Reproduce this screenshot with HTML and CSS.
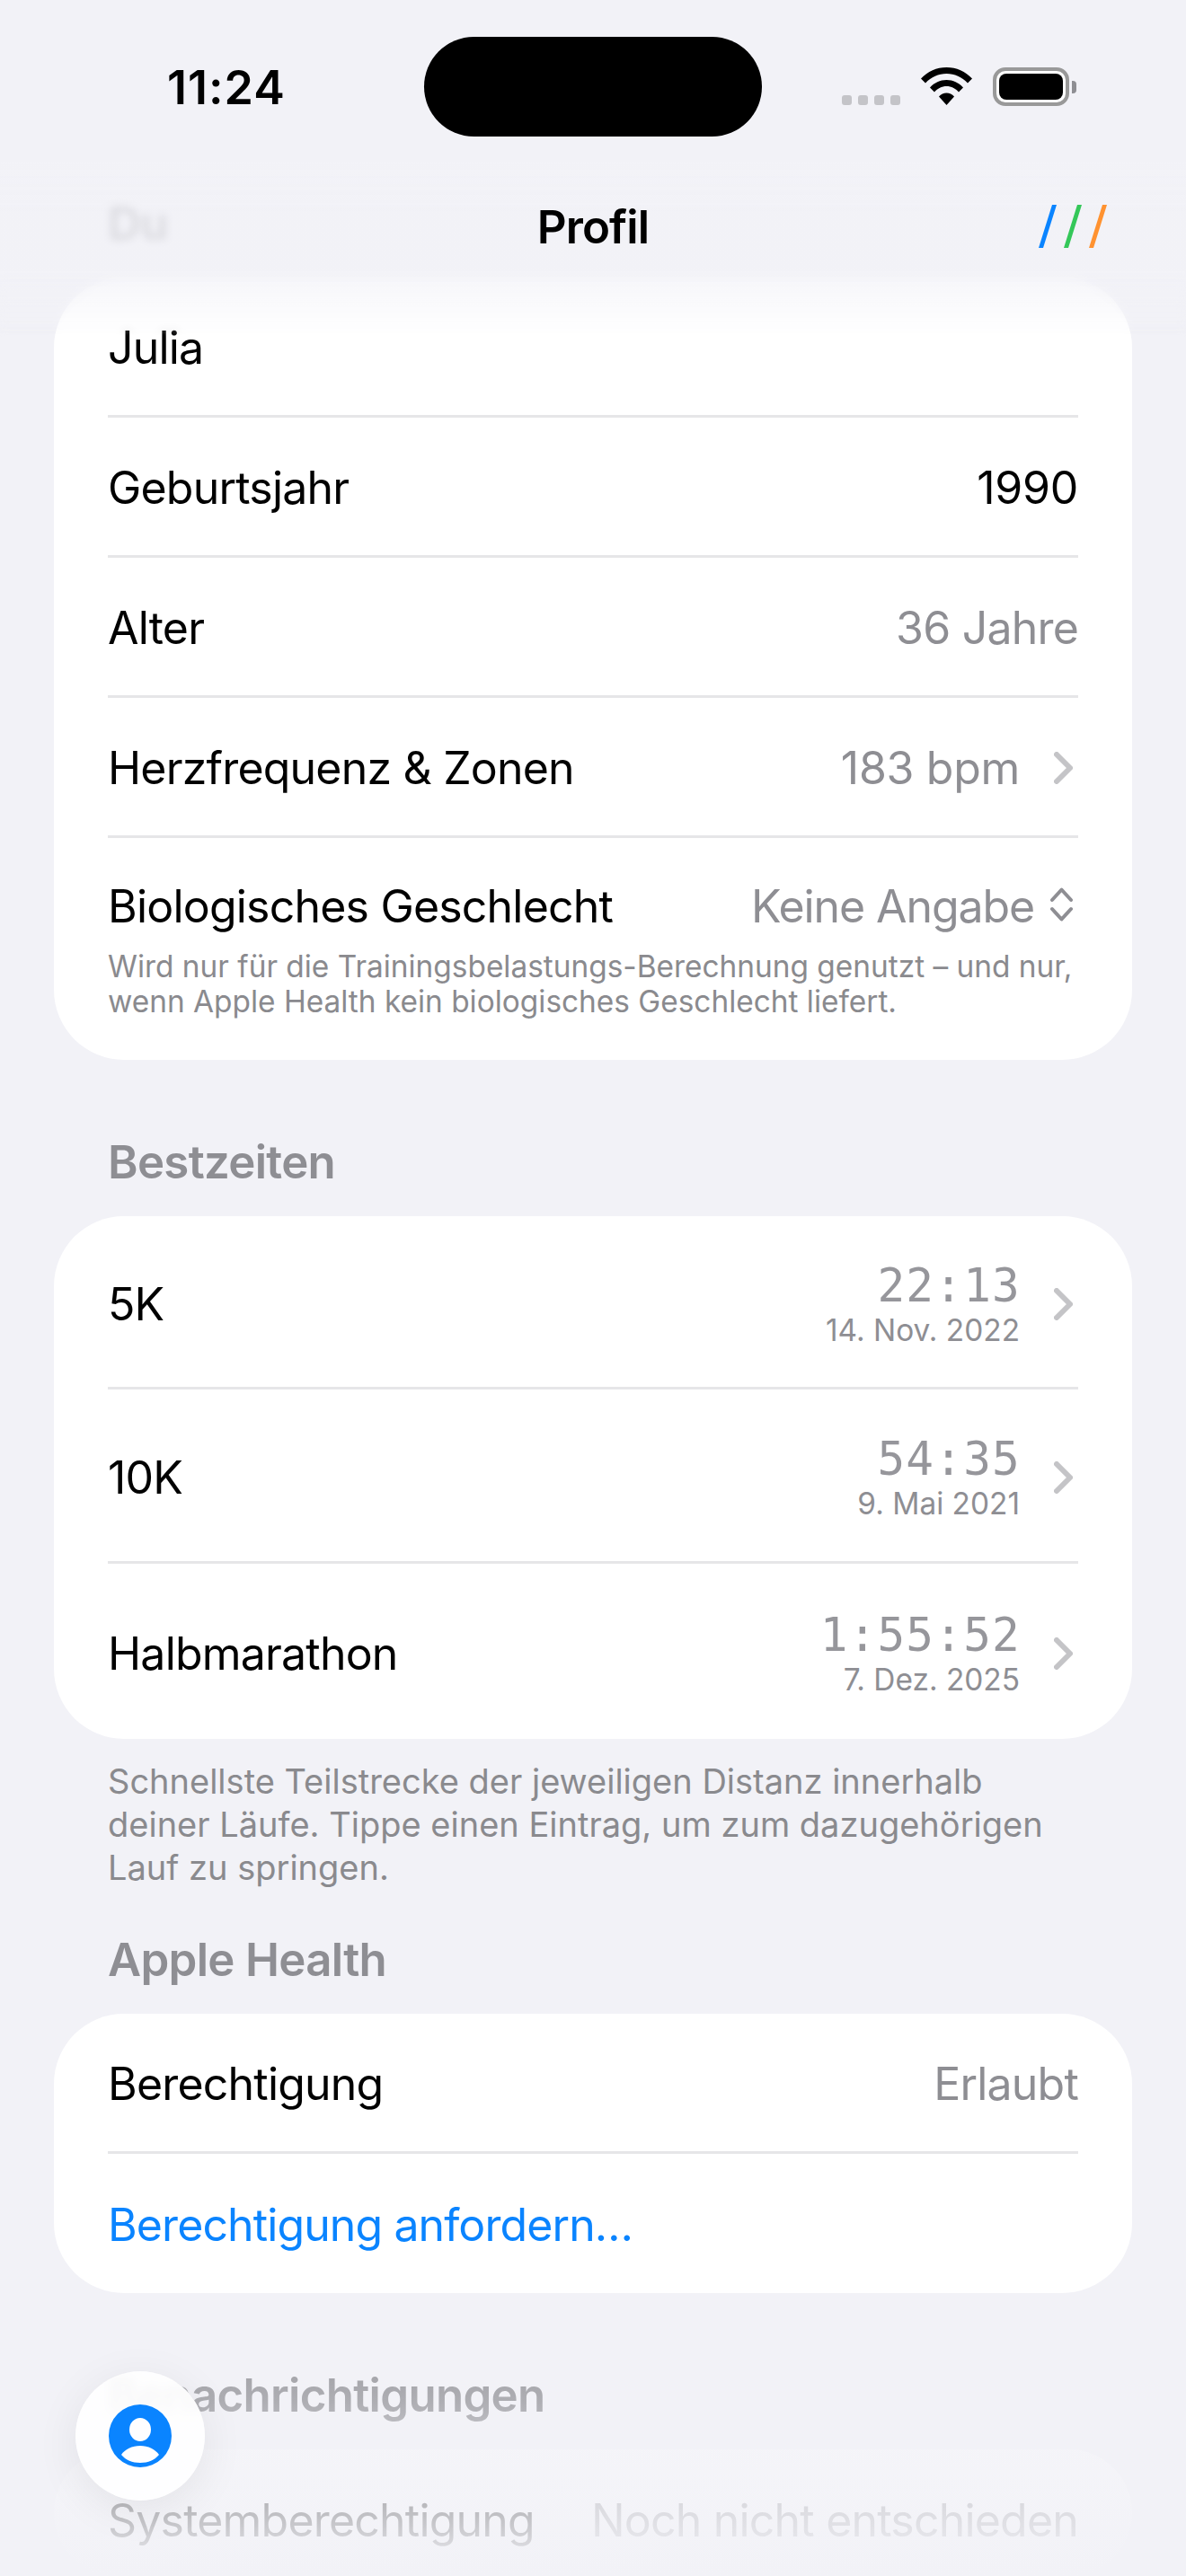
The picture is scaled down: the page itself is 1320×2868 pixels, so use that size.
FILE: index.html
```html
<!DOCTYPE html>
<html lang="de">
<head>
  <meta charset="UTF-8">
  <title>Profil</title>
  <link rel="stylesheet" href="styles.css">
</head>
<body>
  <div class="content">
    <h3 class="section-title first">Du</h3>
    <div class="card">
      <div class="row"><span>Julia</span></div>
      <div class="row"><span>Geburtsjahr</span><span class="num">1990</span></div>
      <div class="row"><span>Alter</span><span class="muted">36 Jahre</span></div>
      <div class="row">
        <span>Herzfrequenz &amp; Zonen</span>
        <span class="right muted num">183 bpm
          <svg class="chev" viewBox="0 0 21 36"><path d="M3 3l15 15L3 33"/></svg>
        </span>
      </div>
      <div class="row picker">
        <span>Biologisches Geschlecht</span>
        <span class="right muted tight">Keine Angabe
          <svg class="updown" viewBox="0 0 25 38"><path d="M2 14L12.500 2.500 23 14M2 24l10.500 11.500L23 24"/></svg>
        </span>
      </div>
      <p class="hint">Wird nur für die Trainingsbelastungs-Berechnung genutzt – und nur, wenn Apple Health kein biologisches Geschlecht liefert.</p>
    </div>

    <h3 class="section-title">Bestzeiten</h3>
    <div class="card">
      <div class="row tall">
        <span>5K</span>
        <span class="right">
          <span class="best"><span class="time">22:13</span><span class="date">14. Nov. 2022</span></span>
          <svg class="chev" viewBox="0 0 21 36"><path d="M3 3l15 15L3 33"/></svg>
        </span>
      </div>
      <div class="row tall">
        <span>10K</span>
        <span class="right">
          <span class="best"><span class="time">54:35</span><span class="date">9. Mai 2021</span></span>
          <svg class="chev" viewBox="0 0 21 36"><path d="M3 3l15 15L3 33"/></svg>
        </span>
      </div>
      <div class="row tall">
        <span>Halbmarathon</span>
        <span class="right">
          <span class="best"><span class="time">1:55:52</span><span class="date">7. Dez. 2025</span></span>
          <svg class="chev" viewBox="0 0 21 36"><path d="M3 3l15 15L3 33"/></svg>
        </span>
      </div>
    </div>
    <p class="note">Schnellste Teilstrecke der jeweiligen Distanz innerhalb deiner Läufe. Tippe einen Eintrag, um zum dazugehörigen Lauf zu springen.</p>

    <h3 class="section-title after-note">Apple Health</h3>
    <div class="card">
      <div class="row"><span>Berechtigung</span><span class="muted">Erlaubt</span></div>
      <div class="row link">Berechtigung anfordern…</div>
    </div>

    <h3 class="section-title">Benachrichtigungen</h3>
    <div class="card faded">
      <div class="row"><span>Systemberechtigung</span><span class="muted">Noch nicht entschieden</span></div>
    </div>
  </div>

  <div class="top-fade"></div>
  <div class="bottom-fade"></div>

  <div class="statusbar">
    <span class="clock">11:24</span>
    <div class="island"></div>
    <div class="status-icons">
      <div class="dots"><i></i><i></i><i></i><i></i></div>
      <svg class="wifi" viewBox="0 0 57 42">
        <path d="M0 12.500C7.500 4.500 17.500 0 28.500 0S49.500 4.500 57 12.500l-5 5C45.500 10.800 37.500 7 28.500 7S11.500 10.800 5 17.500z"/>
        <path d="M10 22.500C15 17 21.300 14 28.500 14S42 17 47 22.500l-5 5C38.500 23.500 33.800 21 28.500 21S18.500 23.500 15 27.500z"/>
        <path d="M20 32.500c2.300-2.500 5.200-4 8.500-4s6.200 1.500 8.500 4L28.500 42z"/>
      </svg>
      <div class="battery"><div class="battery-level"></div></div>
      <div class="battery-tip"></div>
    </div>
  </div>

  <div class="navbar">
    <span class="nav-title">Profil</span>
    <svg class="logo" viewBox="0 0 76 48">
      <polygon points="15,0 20,0 5,48 0,48" fill="#0a84ff"/>
      <polygon points="43,0 48,0 33,48 28,48" fill="#34c759"/>
      <polygon points="71,0 76,0 61,48 56,48" fill="#ff9230"/>
    </svg>
  </div>

  <div class="fab">
    <svg viewBox="0 0 70 70">
      <path fill="#0a84ff" fill-rule="evenodd" d="M35 0a35 35 0 1 0 0 70a35 35 0 1 0 0-70zM35 15a12 13 0 1 1 0 26a12 13 0 1 1 0-26zM14 56c4-6 12-10 21-10s17 4 21 10c-5 6-12 9-21 9s-16-3-21-9z"/>
    </svg>
  </div>
</body>
</html>
```
FILE: styles.css
```css
* {
  box-sizing: border-box;
}
html, body {
  margin: 0;
  height: 2868px;
  overflow: hidden;
}
body {
  position: relative;
  width: 1320px;
  background: #f2f2f7;
  color: #000;
  font-family: Inter, "Noto Sans", sans-serif;
  font-size: 50px;
  letter-spacing: -0.8px;
}
.content {
  padding: 0 60px;
}
.section-title {
  margin: 82px 60px 32px;
  height: 60px;
  line-height: 64px;
  font-size: 51px;
  font-weight: 600;
  letter-spacing: -0.7px;
  color: #8e8e93;
}
.section-title.first {
  margin-top: 217px;
}
.section-title.after-note {
  margin-top: 47px;
}
.card {
  padding: 0 60px;
  background: #fff;
  border-radius: 78px;
}
.card.faded {
  background: #f8f8fb;
  height: 141px;
  overflow: hidden;
}
.row {
  display: flex;
  justify-content: space-between;
  align-items: center;
  height: 156px;
  padding-top: 2px;
  border-bottom: 3px solid #e6e6e8;
  white-space: nowrap;
}
.row:last-child {
  border-bottom: none;
  height: 155px;
}
.row.tall {
  height: 194px;
  padding-top: 5px;
}
.row.tall:first-child {
  height: 193px;
}
.row.tall:last-child {
  height: 195px;
}
.row.picker {
  border-bottom: none;
  height: 90px;
  margin-top: 34px;
  padding-top: 0;
  align-items: flex-start;
  line-height: 84px;
}
.row.link {
  color: #0a84ff;
  letter-spacing: -0.9px;
}
.muted {
  color: #8e8e93;
}
.num {
  letter-spacing: -0.3px;
}
.tight {
  letter-spacing: -1.1px;
}
.right {
  display: flex;
  align-items: center;
}
.chev {
  width: 21px;
  height: 36px;
  margin-left: 38px;
  margin-right: 6px;
  fill: none;
  stroke: #c4c4c7;
  stroke-width: 6;
  stroke-linecap: round;
  stroke-linejoin: round;
}
.updown {
  width: 25px;
  height: 38px;
  margin-left: 18px;
  margin-right: 6px;
  margin-bottom: 4px;
  fill: none;
  stroke: #8e8e93;
  stroke-width: 4;
  stroke-linecap: round;
  stroke-linejoin: round;
}
.hint {
  margin: 0;
  padding-bottom: 45px;
  font-size: 33.4px;
  line-height: 39px;
  letter-spacing: 0;
  color: #8a8a8e;
}
.best {
  display: flex;
  flex-direction: column;
  align-items: flex-end;
}
.time {
  font-family: "DejaVu Sans Mono", monospace;
  font-size: 51px;
  line-height: 58px;
  letter-spacing: 1.2px;
  margin-right: -1px;
  color: #96969b;
}
.date {
  font-size: 33.4px;
  line-height: 40px;
  letter-spacing: 0;
  color: #8e8e93;
}
.note {
  margin: 23px 60px 0;
  font-size: 38px;
  line-height: 48px;
  letter-spacing: 0;
  color: #8a8a8e;
}

/* header and footer veils, they lie over the scrolling list */
.top-fade {
  position: absolute;
  top: 0;
  left: 0;
  right: 0;
  height: 375px;
  background: linear-gradient(#f2f2f7 0, #f2f2f7 180px, rgba(242, 242, 247, 0.76) 235px, rgba(242, 242, 247, 0.76) 310px);
  backdrop-filter: blur(5px);
  -webkit-mask-image: linear-gradient(#000 300px, transparent 375px);
  mask-image: linear-gradient(#000 300px, transparent 375px);
}
.bottom-fade {
  position: absolute;
  left: 0;
  right: 0;
  bottom: 0;
  height: 308px;
  background: linear-gradient(rgba(242, 242, 247, 0) 0, rgba(242, 242, 247, 0.32) 37%, rgba(242, 242, 247, 0.6) 54%, rgba(242, 242, 247, 0.82) 81%, #f2f2f7 100%);
}
.statusbar {
  position: absolute;
  top: 0;
  left: 0;
  width: 100%;
  height: 190px;
}
.clock {
  position: absolute;
  left: 186px;
  top: 66px;
  font-size: 52px;
  line-height: 63px;
  font-weight: 600;
  letter-spacing: 1px;
}
.island {
  position: absolute;
  left: 472px;
  top: 41px;
  width: 376px;
  height: 111px;
  border-radius: 56px;
  background: #000;
}
.status-icons {
  position: absolute;
  left: 937px;
  top: 75px;
  display: flex;
  align-items: flex-start;
}
.dots {
  display: flex;
  gap: 7px;
  margin-top: 31px;
  margin-right: 23px;
}
.dots i {
  width: 11px;
  height: 11px;
  border-radius: 3px;
  background: #c4c4c8;
}
.wifi {
  width: 57px;
  height: 42px;
  margin-right: 23px;
}
.battery {
  width: 85px;
  height: 43px;
  padding: 3px;
  border: 4px solid #999;
  border-radius: 14px;
  background: #fff;
}
.battery-level {
  height: 100%;
  border-radius: 8px;
  background: #000;
}
.battery-tip {
  width: 5px;
  height: 14px;
  margin-top: 15px;
  margin-left: 3px;
  border-radius: 0 4px 4px 0;
  background: #8e8e93;
}
.navbar {
  position: absolute;
  top: 220px;
  left: 0;
  width: 100%;
  height: 64px;
  display: flex;
  justify-content: center;
  align-items: center;
}
.nav-title {
  font-weight: 600;
  font-size: 51px;
  letter-spacing: -0.9px;
}
.logo {
  position: absolute;
  left: 1156px;
  top: 8px;
  width: 76px;
  height: 48px;
}
.fab {
  position: absolute;
  left: 84px;
  top: 2640px;
  width: 144px;
  height: 144px;
  display: flex;
  align-items: center;
  justify-content: center;
  border-radius: 50%;
  background: rgba(255, 255, 255, 0.9);
  backdrop-filter: blur(6px);
  box-shadow: 0 10px 50px rgba(0, 0, 0, 0.07);
}
.fab svg {
  width: 70px;
  height: 70px;
}
```
